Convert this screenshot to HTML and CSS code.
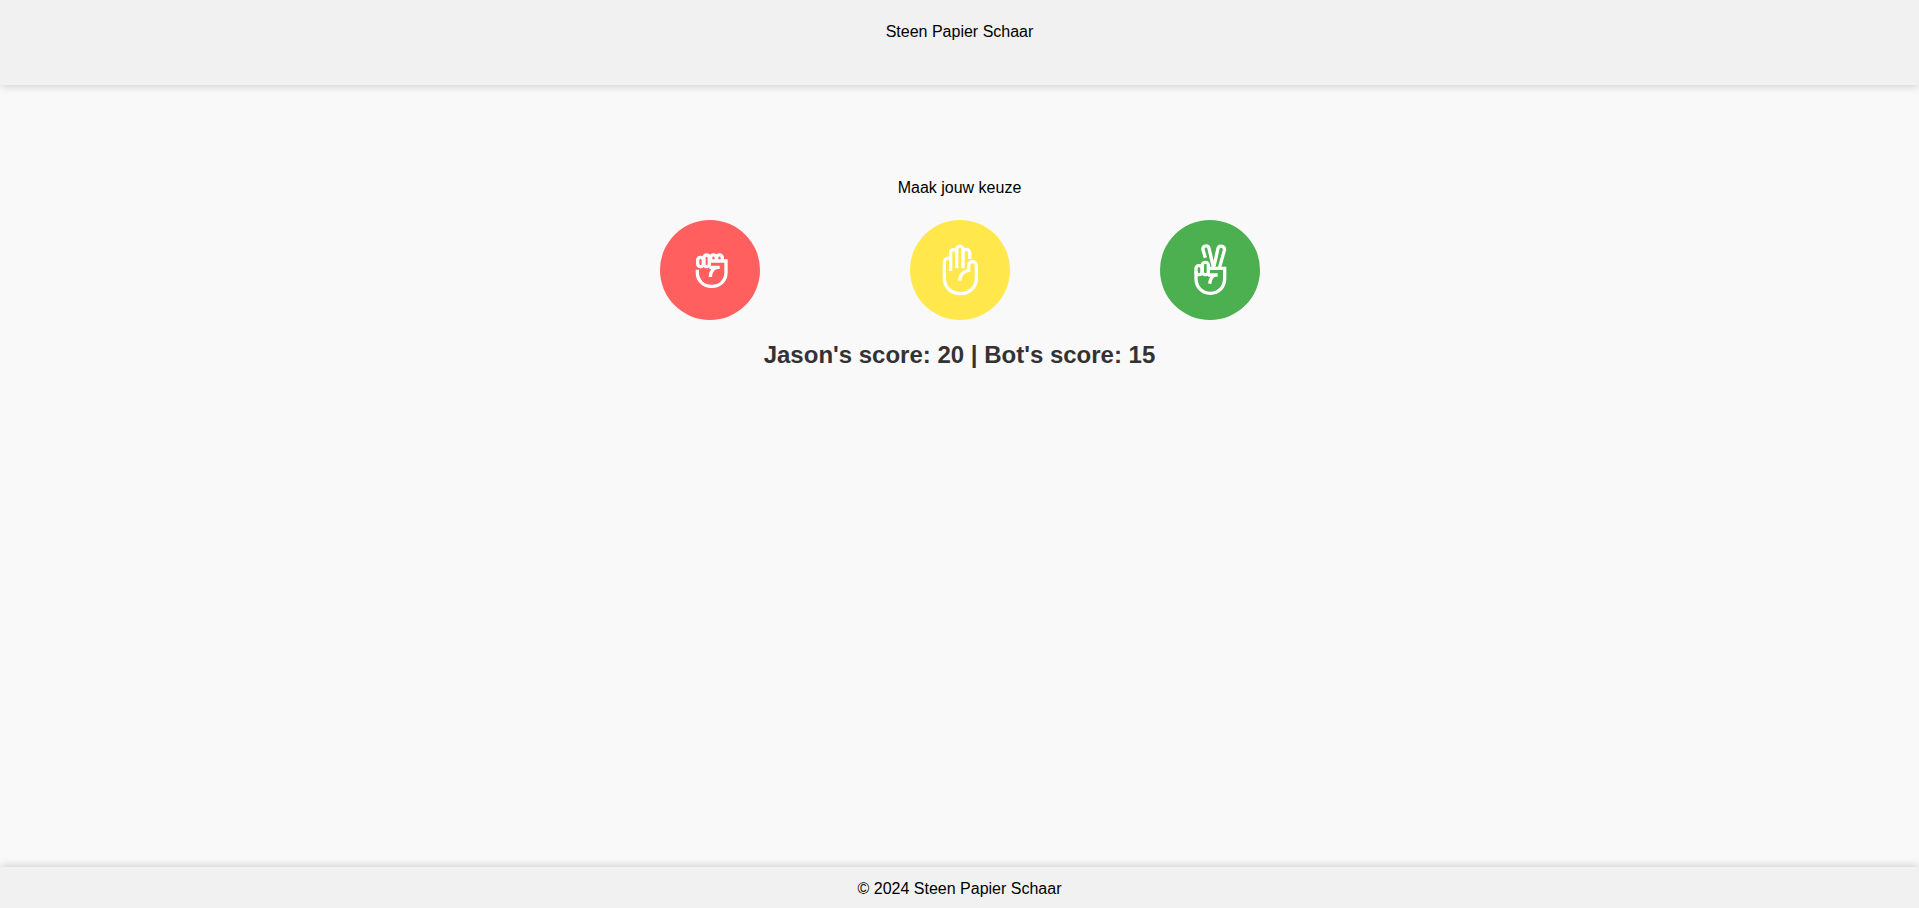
FILE: index.html
```html
<!DOCTYPE html>
<html lang="nl">
	<head>
		<meta charset="utf-8">
		<title>Steen Papier Schaar</title>
		<link rel="stylesheet" href="styles.css">
	</head>
	<body>
		<header class="header">
			<p>Steen Papier Schaar</p>
		</header>
		<main class="game">
			<p>Maak jouw keuze</p>
			<div class="choices">
				<button class="choice rock" type="button" aria-label="Steen">
					<svg class="icon" viewBox="0 0 180 210">
						<rect x="53" y="67" width="17" height="28" rx="8"/>
						<rect x="72" y="60" width="16" height="35" rx="8"/>
						<path d="M92 78V68a8 8 0 0 1 17 0v10M110 78V68a8 8 0 0 1 17 0v10"/>
						<path d="M52 104v8c0 26 18 42 43 42s43-16 43-42V78H88"/>
						<path d="M88 97h31M112 97c-13 2-20 12-21 29"/>
					</svg>
				</button>
				<button class="choice paper" type="button" aria-label="Papier">
					<svg class="icon" viewBox="0 0 180 210">
						<path d="M62 108V53a9 9 0 0 1 18 0v47"/>
						<path d="M80 53V44a9 10 0 0 1 19 0v56"/>
						<path d="M99 53a9 9 0 0 1 20 0v19"/>
						<path d="M62 71c-10-4-19 1-19 11v46c0 31 22 48 48 48s48-17 48-48V92c0-16-23-16-23 0v14c-16 3-26 14-27 31"/>
					</svg>
				</button>
				<button class="choice scissors" type="button" aria-label="Schaar">
					<svg class="icon" viewBox="0 0 180 210">
						<rect x="48" y="92" width="18" height="27" rx="8"/>
						<rect x="67" y="82" width="18" height="37" rx="8"/>
						<path d="M76 68l-7-24c-2-12 15-16 18-4l14 60"/>
						<path d="M101 99l13-59c5-12 22-6 19 6l-15 54"/>
						<path d="M48 108v22c0 27 18 45 43 45s43-18 43-45v-30H85"/>
						<path d="M84 120h29M106 120c-10 3-15 12-17 26"/>
					</svg>
				</button>
			</div>
			<p class="score">Jason's score: 20 | Bot's score: 15</p>
		</main>
		<footer class="footer">
			<p>© 2024 Steen Papier Schaar</p>
		</footer>
	</body>
</html>
```
FILE: styles.css
```css
*{
	margin:0;
	padding:0;
	box-sizing: border-box;
}
body{
	min-height:100vh;
	display:flex;
	flex-direction: column;
	background-color: #f9f9f9;
	color:#000;
	font-family: Arial, "Liberation Sans", sans-serif;
	font-size:16px;
	line-height:18px;
	text-align:center;
}
.header{
	padding:23px 20px 44px;
	background-color: #f1f1f1;
	box-shadow: 0 2px 8px rgba(0,0,0,0.15);
}
.game{
	flex:1;
	display:flex;
	flex-direction: column;
	align-items: center;
	padding-top:94px;
}
.choices{
	display:flex;
	justify-content: center;
	gap:150px;
	margin:23px 0 21px;
}
.choice{
	width:100px;
	height:100px;
	display:flex;
	align-items: center;
	justify-content: center;
	border:none;
	border-radius:50%;
	cursor: pointer;
}
.rock{
	background-color: #ff5f5f;
}
.paper{
	background-color: #ffe74c;
}
.scissors{
	background-color: #4caf50;
}
.icon{
	width:60px;
	height:70px;
	fill:none;
	stroke:#fff;
	stroke-width:10;
}
.score{
	color:#333;
	font-size:24px;
	font-weight:bold;
	line-height:28px;
}
.footer{
	padding:13px 10px 10px;
	background-color: #f1f1f1;
	box-shadow: 0 -2px 8px rgba(0,0,0,0.15);
}
```
